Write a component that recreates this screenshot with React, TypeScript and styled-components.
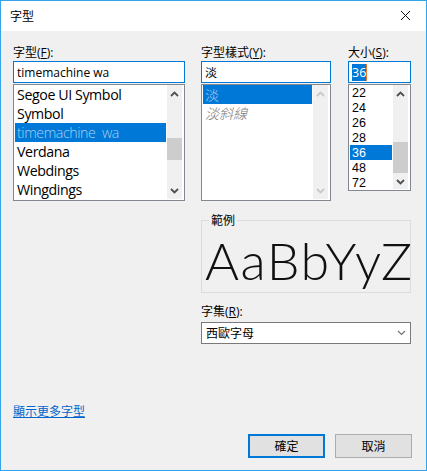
import { ReactNode } from "react";
import styled, { createGlobalStyle } from "styled-components";
import { X } from "lucide-react";

const FONT = `"Open Sans", "Noto Sans", "Noto Sans CJK TC", sans-serif`;

const GlobalStyle = createGlobalStyle`
  html, body {
    margin: 0;
    padding: 0;
    background: #f0f0f0;
  }
`;

const Chevron = ({
  up,
  color = "#505050",
  weight = 1.8,
}: {
  up?: boolean;
  color?: string;
  weight?: number;
}) => (
  <svg width="9" height="6" viewBox="0 0 9 6">
    <path
      d={up ? "M1 5 L4.5 1.5 L8 5" : "M1 1 L4.5 4.5 L8 1"}
      fill="none"
      stroke={color}
      strokeWidth={weight}
    />
  </svg>
);

const Scrollbar = ({
  top,
  height,
  disabled,
}: {
  top?: number;
  height?: number;
  disabled?: boolean;
}) => {
  const color = disabled ? "#c8c8c8" : "#505050";
  return (
    <ScrollTrack>
      <ScrollArrow>
        <Chevron up color={color} />
      </ScrollArrow>
      <ScrollMiddle>
        {height ? <ScrollThumb $top={top || 0} $height={height} /> : null}
      </ScrollMiddle>
      <ScrollArrow>
        <Chevron color={color} />
      </ScrollArrow>
    </ScrollTrack>
  );
};

const Field = ({ label, hotkey, suffix }: { label: string; hotkey: string; suffix?: ReactNode }) => (
  <Label>
    {label}(<u>{hotkey}</u>){suffix || ":"}
  </Label>
);

const App = () => {
  return (
    <Window>
      <GlobalStyle />
      <TitleBar>
        <Title>字型</Title>
        <CloseButton>
          <X size={17} strokeWidth={1.4} color="#111" />
        </CloseButton>
      </TitleBar>
      <Body>
        <Columns>
          <Column $width={172} $after={16}>
            <Field label="字型" hotkey="F" />
            <Input>
              <InputText>timemachine wa</InputText>
            </Input>
            <ListBox $height={117}>
              <Rows>
                <FontRow>Segoe UI Symbol</FontRow>
                <FontRow>Symbol</FontRow>
                <FontRow $selected>timemachine&nbsp; wa</FontRow>
                <FontRow>Verdana</FontRow>
                <FontRow>Webdings</FontRow>
                <FontRow>Wingdings</FontRow>
              </Rows>
              <Scrollbar top={36} height={22} />
            </ListBox>
          </Column>
          <Column $width={130} $after={17}>
            <Field label="字型樣式" hotkey="Y" />
            <Input>
              <InputText>淡</InputText>
            </Input>
            <ListBox $height={117}>
              <Rows>
                <StyleRow $selected>淡</StyleRow>
                <StyleRow $italic>淡斜線</StyleRow>
              </Rows>
              <Scrollbar disabled />
            </ListBox>
          </Column>
          <Column $width={63}>
            <Field label="大小" hotkey="S" />
            <Input>
              <SelectedText>36</SelectedText>
              <Caret />
            </Input>
            <ListBox $height={107}>
              <Rows>
                <SizeRow>22</SizeRow>
                <SizeRow>24</SizeRow>
                <SizeRow>26</SizeRow>
                <SizeRow>28</SizeRow>
                <SizeRow $selected>36</SizeRow>
                <SizeRow>48</SizeRow>
                <SizeRow>72</SizeRow>
              </Rows>
              <Scrollbar top={40} height={31} />
            </ListBox>
          </Column>
        </Columns>
        <Lower>
          <SampleGroup>
            <SampleLegend>範例</SampleLegend>
            <SampleText>AaBbYyZ</SampleText>
          </SampleGroup>
          <CharsetLabel>
            <Field label="字集" hotkey="R" />
          </CharsetLabel>
          <Select>
            <span>西歐字母</span>
            <Chevron color="#707070" weight={1.1} />
          </Select>
        </Lower>
        <MoreLink href="#">顯示更多字型</MoreLink>
        <Buttons>
          <Button $primary>確定</Button>
          <Button>取消</Button>
        </Buttons>
      </Body>
    </Window>
  );
};

const Window = styled.div`
  box-sizing: border-box;
  width: 427px;
  height: 471px;
  border: 1px solid #35a3ea;
  background: #f0f0f0;
  color: #000;
  font-family: ${FONT};
  font-size: 12px;
  overflow: hidden;
  display: flex;
  flex-direction: column;
`;

const TitleBar = styled.div`
  height: 30px;
  background: #fff;
  display: flex;
  align-items: center;
  justify-content: space-between;
  padding: 0 12px 0 9px;
  flex-shrink: 0;
`;

const Title = styled.div`
  font-size: 12px;
  margin-top: -1px;
`;

const CloseButton = styled.div`
  display: flex;
  margin-top: -1px;
`;

const Body = styled.div`
  flex: 1;
  padding: 13px 14px 0 12px;
  display: flex;
  flex-direction: column;
`;

const Columns = styled.div`
  display: flex;
  align-items: flex-start;
`;

const Column = styled.div<{ $width: number; $after?: number }>`
  width: ${({ $width }) => $width}px;
  margin-right: ${({ $after }) => $after || 0}px;
  flex-shrink: 0;
`;

const Label = styled.div`
  height: 17px;
  line-height: 17px;
  white-space: nowrap;
  u {
    text-underline-offset: 1px;
  }
`;

const Input = styled.div`
  box-sizing: border-box;
  height: 22px;
  background: #fff;
  border: 1px solid #0078d7;
  display: flex;
  align-items: center;
  padding-left: 3px;
  margin-bottom: 1px;
`;

const InputText = styled.span`
  font-size: 12px;
`;

const SelectedText = styled.span`
  background: #0078d7;
  color: #fff;
  font-size: 12.5px;
  line-height: 17px;
`;

const Caret = styled.span`
  width: 1px;
  height: 17px;
  background: #e8742a;
`;

const ListBox = styled.div<{ $height: number }>`
  box-sizing: border-box;
  height: ${({ $height }) => $height}px;
  background: #fff;
  border: 1px solid #828790;
  padding: 0 2px 1px 1px;
  display: flex;
  gap: 1px;
`;

const Rows = styled.div`
  flex: 1;
  min-width: 0;
  overflow: hidden;
`;

const FontRow = styled.div<{ $selected?: boolean }>`
  height: 19px;
  line-height: 19px;
  font-size: 14.2px;
  letter-spacing: -0.4px;
  padding-left: 2px;
  white-space: nowrap;
  background: ${({ $selected }) => ($selected ? "#0078d7" : "transparent")};
  color: ${({ $selected }) => ($selected ? "#a9d0f2" : "#000")};
  font-weight: ${({ $selected }) => ($selected ? 300 : 400)};
`;

const StyleRow = styled.div<{ $selected?: boolean; $italic?: boolean }>`
  height: 19px;
  line-height: 19px;
  font-size: 14px;
  padding-left: 2px;
  background: ${({ $selected }) => ($selected ? "#0078d7" : "transparent")};
  color: ${({ $selected }) => ($selected ? "#a6cdf0" : "#7a7a7a")};
  font-style: ${({ $italic }) => ($italic ? "italic" : "normal")};
  font-weight: 300;
`;

const SizeRow = styled.div<{ $selected?: boolean }>`
  box-sizing: border-box;
  height: 15px;
  padding: 1px 0 0 2px;
  line-height: 14px;
  font-family: "Liberation Sans", sans-serif;
  font-size: 12.5px;
  background: ${({ $selected }) => ($selected ? "#0078d7" : "transparent")};
  color: ${({ $selected }) => ($selected ? "#fff" : "#000")};
`;

const ScrollTrack = styled.div`
  width: 15px;
  flex-shrink: 0;
  background: #f0f0f0;
  display: flex;
  flex-direction: column;
`;

const ScrollArrow = styled.div`
  height: 17px;
  display: flex;
  align-items: center;
  justify-content: center;
  flex-shrink: 0;
`;

const ScrollMiddle = styled.div`
  flex: 1;
`;

const ScrollThumb = styled.div<{ $top: number; $height: number }>`
  margin-top: ${({ $top }) => $top}px;
  height: ${({ $height }) => $height}px;
  background: #cdcdcd;
`;

const Lower = styled.div`
  width: 210px;
  margin-left: 188px;
  margin-top: 11px;
`;

const SampleGroup = styled.fieldset`
  box-sizing: border-box;
  height: 81px;
  margin: 0;
  padding: 0 0 0 3px;
  border: 1px solid #dcdcdc;
  min-width: 0;
`;

const SampleLegend = styled.legend`
  margin-left: 4px;
  padding: 0 2px;
  font-size: 12px;
  line-height: 17px;
`;

const SampleText = styled.div`
  font-family: "Lato", "Inter", sans-serif;
  font-weight: 300;
  font-size: 52px;
  line-height: 62px;
  letter-spacing: 1.5px;
  white-space: nowrap;
  color: #111;
`;

const CharsetLabel = styled.div`
  margin-top: 10px;
`;

const Select = styled.div`
  box-sizing: border-box;
  height: 22px;
  margin-top: 2px;
  background: #fff;
  border: 1px solid #7a7a7a;
  display: flex;
  align-items: center;
  justify-content: space-between;
  padding: 0 4px 0 4px;
`;

const MoreLink = styled.a`
  align-self: flex-start;
  margin-top: 59px;
  color: #0066cc;
  font-size: 12px;
  line-height: 17px;
  text-decoration: underline;
`;

const Buttons = styled.div`
  display: flex;
  justify-content: flex-end;
  gap: 10px;
  margin-top: 14px;
`;

const Button = styled.div<{ $primary?: boolean }>`
  box-sizing: border-box;
  width: 77px;
  height: 24px;
  background: #e1e1e1;
  border: ${({ $primary }) => ($primary ? "2px solid #0078d7" : "1px solid #adadad")};
  display: flex;
  align-items: center;
  justify-content: center;
  font-size: 12px;
`;

export default App;
